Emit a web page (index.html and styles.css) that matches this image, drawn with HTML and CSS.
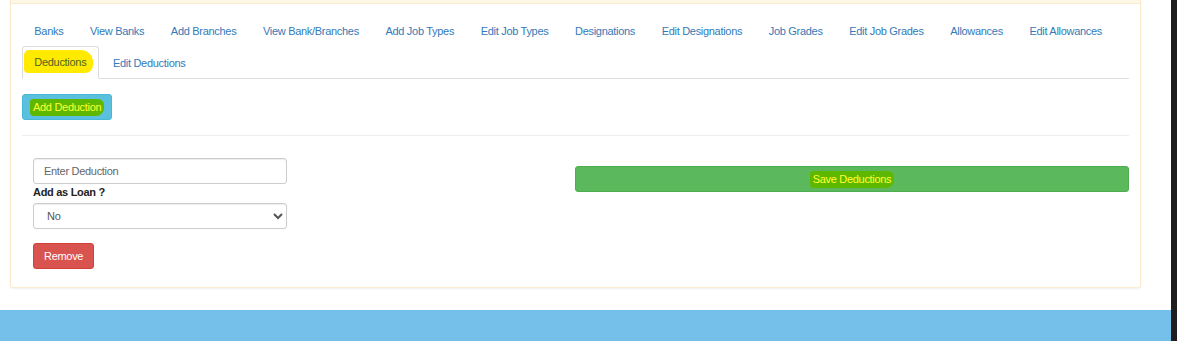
FILE: index.html
```html
<!DOCTYPE html>
<html lang="en">
<head>
    <meta charset="UTF-8">
    <title>Deductions</title>
    <link rel="stylesheet" href="styles.css">
</head>
<body>
<div class="screen">
    <div class="page">
        <div class="panel">
            <div class="panel_heading"></div>
            <div class="panel_body">
                <ul class="tabs">
                    <li><a href="#">Banks</a></li>
                    <li><a href="#">View Banks</a></li>
                    <li><a href="#">Add Branches</a></li>
                    <li><a href="#">View Bank/Branches</a></li>
                    <li><a href="#">Add Job Types</a></li>
                    <li><a href="#">Edit Job Types</a></li>
                    <li><a href="#">Designations</a></li>
                    <li><a href="#">Edit Designations</a></li>
                    <li><a href="#">Job Grades</a></li>
                    <li><a href="#">Edit Job Grades</a></li>
                    <li><a href="#">Allowances</a></li>
                    <li><a href="#">Edit Allowances</a></li>
                    <li class="active"><a href="#"><span class="mark_yellow">Deductions</span></a></li>
                    <li><a href="#">Edit Deductions</a></li>
                </ul>
                <div class="tab_content">
                    <button class="btn btn_info" type="button"><span class="mark_green">Add Deduction</span></button>
                    <hr class="divider">
                    <!-- one deduction row -->
                    <div class="row">
                        <div class="col_left">
                            <input class="field" type="text" placeholder="Enter Deduction">
                            <label class="field_label">Add as Loan ?</label>
                            <select class="field">
                                <option>No</option>
                                <option>Yes</option>
                            </select>
                            <button class="btn btn_danger" type="button">Remove</button>
                        </div>
                        <div class="col_right">
                            <button class="btn btn_success btn_block" type="button"><span class="mark_green">Save Deductions</span></button>
                        </div>
                    </div>
                </div>
            </div>
        </div>
        <div class="footer"></div>
    </div>
    <div class="scroll_edge"></div>
</div>
</body>
</html>
```

FILE: styles.css
```css
* {
    box-sizing: border-box;
}

body {
    margin: 0;
    font-family: "Liberation Sans", Arial, sans-serif;
    font-size: 11px;
    letter-spacing: -0.3px;
    color: #333;
    background-color: #fff;
}

.screen {
    display: flex;
    height: 341px;
    overflow: hidden;
}

.page {
    flex: 1;
    display: flex;
    flex-direction: column;
}

.scroll_edge {
    width: 6px;
    background-color: #1e1e1e;
}

.panel {
    margin-left: 10px;
    width: 1131px;
    border: 1px solid #faebcc;
    border-top: none;
    border-radius: 0 0 3px 3px;
    box-shadow: 0 1px 2px rgba(0, 0, 0, 0.06);
}

.panel_heading {
    height: 4px;
    background-color: #fcf8e3;
    border-bottom: 1px solid #faebcc;
}

.panel_body {
    padding: 10px 11px 18px;
}

/* tabs */
.tabs {
    list-style: none;
    margin: 0;
    padding: 0;
    display: flex;
    flex-wrap: wrap;
    border-bottom: 1px solid #ddd;
}

.tabs li {
    margin-bottom: -1px;
    margin-right: 2px;
}

.tabs a {
    display: block;
    padding: 8px 11.3px 7px;
    line-height: 16px;
    color: #337ab7;
    text-decoration: none;
    border: 1px solid transparent;
    border-radius: 3px 3px 0 0;
}

.tabs .active a {
    padding-top: 7px;
    padding-bottom: 8px;
    color: #4f6426;
    border-color: #ddd;
    border-bottom-color: #fff;
    background-color: #fff;
}

.mark_yellow {
    background-color: #ffea00;
    padding: 6px 7px 5px 10px;
    margin: -6px -7px -5px -10px;
    border-radius: 5px 12px 8px 4px;
}

.mark_green {
    color: #ffff2e;
    background-color: #5fb800;
    padding: 2px 3px 3px;
    margin: -2px -3px -3px;
    border-radius: 3px 6px 8px 4px;
}

.tab_content {
    padding-top: 15px;
}

/* buttons */
.btn {
    font-family: inherit;
    font-size: 11px;
    letter-spacing: -0.3px;
    line-height: 16px;
    height: 26px;
    padding: 4px 10px;
    border: 1px solid transparent;
    border-radius: 3px;
    color: #fff;
    cursor: pointer;
}

.btn_info {
    background-color: #5bc0de;
    border-color: #46b8da;
}

.btn_danger {
    background-color: #d9534f;
    border-color: #d43f3a;
    margin-top: 14px;
}

.btn_success {
    background-color: #5cb85c;
    border-color: #4cae4c;
}

.btn_block {
    width: 100%;
}

.divider {
    margin: 15px 0 22px;
    border: 0;
    border-top: 1px solid #eee;
}

/* form row */
.row {
    display: grid;
    grid-template-columns: 553px 1fr;
}

.col_left {
    padding-left: 11px;
    display: flex;
    flex-direction: column;
    align-items: flex-start;
}

.col_right {
    padding-top: 8px;
}

.field {
    width: 254px;
    height: 26px;
    padding: 4px 10px;
    font-family: inherit;
    font-size: 11px;
    letter-spacing: -0.3px;
    color: #555;
    background-color: #fff;
    border: 1px solid #ccc;
    border-radius: 3px;
    box-shadow: inset 0 1px 1px rgba(0, 0, 0, 0.075);
}

.field::placeholder {
    color: #666;
}

.field_label {
    font-weight: bold;
    color: #222;
    line-height: 14px;
    margin: 1px 0 4px;
}

select.field {
    padding-left: 9px;
}

.footer {
    margin-top: 22px;
    flex: 1;
    background-color: #74c0ea;
}
```
